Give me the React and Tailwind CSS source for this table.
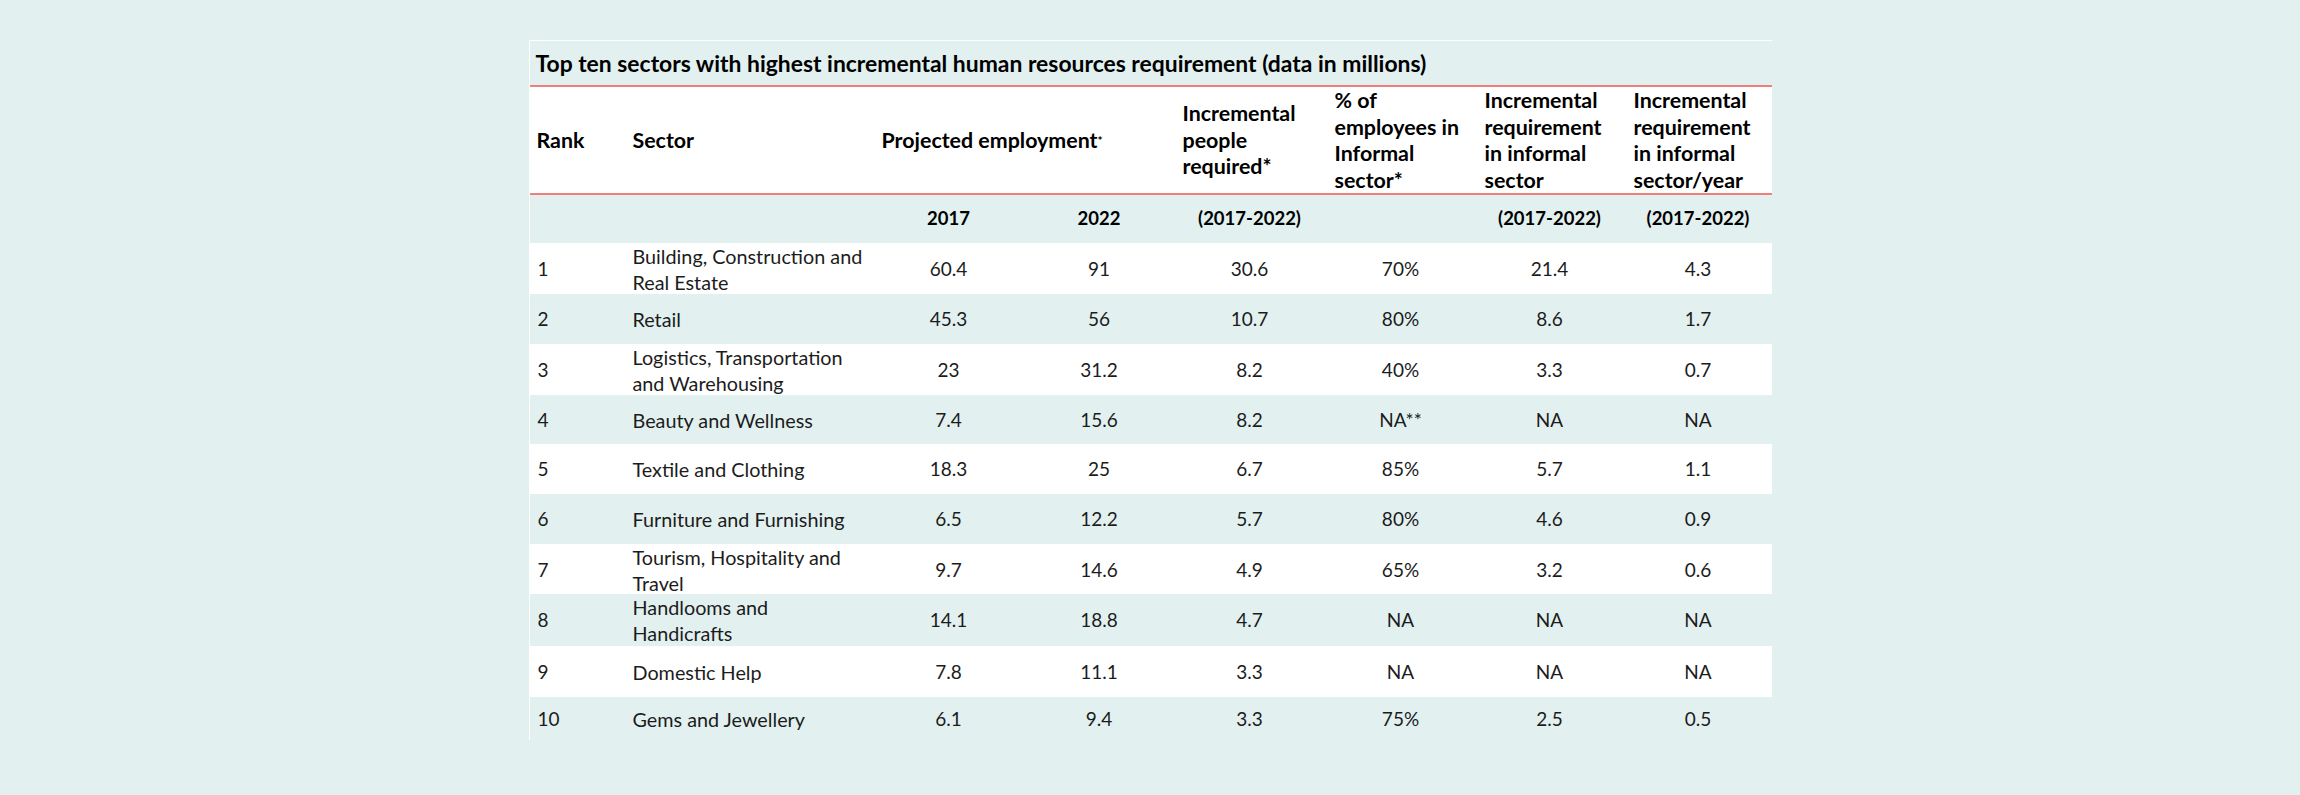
import React from 'react';

const rows = [
    { rank: '1', sector: ['Building, Construction and', 'Real Estate'], v: ['60.4', '91', '30.6', '70%', '21.4', '4.3'], bg: 'bg-white', h: 'h-[51px]' },
    { rank: '2', sector: ['Retail'], v: ['45.3', '56', '10.7', '80%', '8.6', '1.7'], bg: 'bg-[#e2f1f0]', h: 'h-[50px]' },
    { rank: '3', sector: ['Logistics, Transportation', 'and Warehousing'], v: ['23', '31.2', '8.2', '40%', '3.3', '0.7'], bg: 'bg-white', h: 'h-[51px]' },
    { rank: '4', sector: ['Beauty and Wellness'], v: ['7.4', '15.6', '8.2', 'NA**', 'NA', 'NA'], bg: 'bg-[#e2f1f0]', h: 'h-[49px]' },
    { rank: '5', sector: ['Textile and Clothing'], v: ['18.3', '25', '6.7', '85%', '5.7', '1.1'], bg: 'bg-white', h: 'h-[50px]' },
    { rank: '6', sector: ['Furniture and Furnishing'], v: ['6.5', '12.2', '5.7', '80%', '4.6', '0.9'], bg: 'bg-[#e2f1f0]', h: 'h-[50px]' },
    { rank: '7', sector: ['Tourism, Hospitality and', 'Travel'], v: ['9.7', '14.6', '4.9', '65%', '3.2', '0.6'], bg: 'bg-white', h: 'h-[50px]' },
    { rank: '8', sector: ['Handlooms and', 'Handicrafts'], v: ['14.1', '18.8', '4.7', 'NA', 'NA', 'NA'], bg: 'bg-[#e2f1f0]', h: 'h-[52px]' },
    { rank: '9', sector: ['Domestic Help'], v: ['7.8', '11.1', '3.3', 'NA', 'NA', 'NA'], bg: 'bg-white', h: 'h-[51px]' },
    { rank: '10', sector: ['Gems and Jewellery'], v: ['6.1', '9.4', '3.3', '75%', '2.5', '0.5'], bg: 'bg-[#e2f1f0]', h: 'h-[43px]' },
];

const grid = 'grid grid-cols-[94px_249px_152px_149px_152px_150px_148px_149px]';

function App() {
    return (
        <div className="w-[2300px] h-[795px] bg-[#e2f1f0] pt-[40px] [font-family:Lato,sans-serif] text-[#1c1c1c] overflow-hidden">
            <div className="w-[1243px] mx-auto border-t border-l border-white">
                {/* Titre */}
                <div className="h-[44px] flex items-center pl-[6px] text-[22.9px] font-bold text-black whitespace-nowrap">
                    Top ten sectors with highest incremental human resources requirement (data in millions)
                </div>

                {/* En-tête */}
                <div className={`${grid} h-[110px] bg-white border-t-2 border-b-2 border-[#ee7f7f] text-[21.4px] font-bold leading-[26.5px] text-black whitespace-nowrap`}>
                    <div className="flex items-center pl-[7px]">Rank</div>
                    <div className="flex items-center pl-[9px]">Sector</div>
                    <div className="col-span-2 flex items-center pl-[9px]">
                        <span>Projected employment<sup className="text-[12px] relative -top-[3px]">*</sup></span>
                    </div>
                    <div className="flex items-center pl-[9px]">Incremental<br />people<br />required*</div>
                    <div className="flex items-center pl-[9px]">% of<br />employees in<br />Informal<br />sector*</div>
                    <div className="flex items-center pl-[9px]">Incremental<br />requirement<br />in informal<br />sector</div>
                    <div className="flex items-center pl-[10px]">Incremental<br />requirement<br />in informal<br />sector/year</div>
                </div>

                {/* Sous-en-tête */}
                <div className={`${grid} h-[48px] items-center text-center text-[18.5px] font-bold text-black`}>
                    <div></div>
                    <div></div>
                    <div>2017</div>
                    <div>2022</div>
                    <div>(2017-2022)</div>
                    <div></div>
                    <div>(2017-2022)</div>
                    <div>(2017-2022)</div>
                </div>

                {/* Lignes */}
                {rows.map((row) => (
                    <div key={row.rank} className={`${grid} ${row.bg} ${row.h} items-center text-[19px] leading-[26px]`}>
                        <div className="pl-[8px]">{row.rank}</div>
                        <div className="pl-[9px] text-[19.8px] whitespace-nowrap">
                            {row.sector.map((line) => (
                                <div key={line}>{line}</div>
                            ))}
                        </div>
                        {row.v.map((val, i) => (
                            <div key={i} className="text-center">{val}</div>
                        ))}
                    </div>
                ))}
            </div>
        </div>
    );
}

export default App;
